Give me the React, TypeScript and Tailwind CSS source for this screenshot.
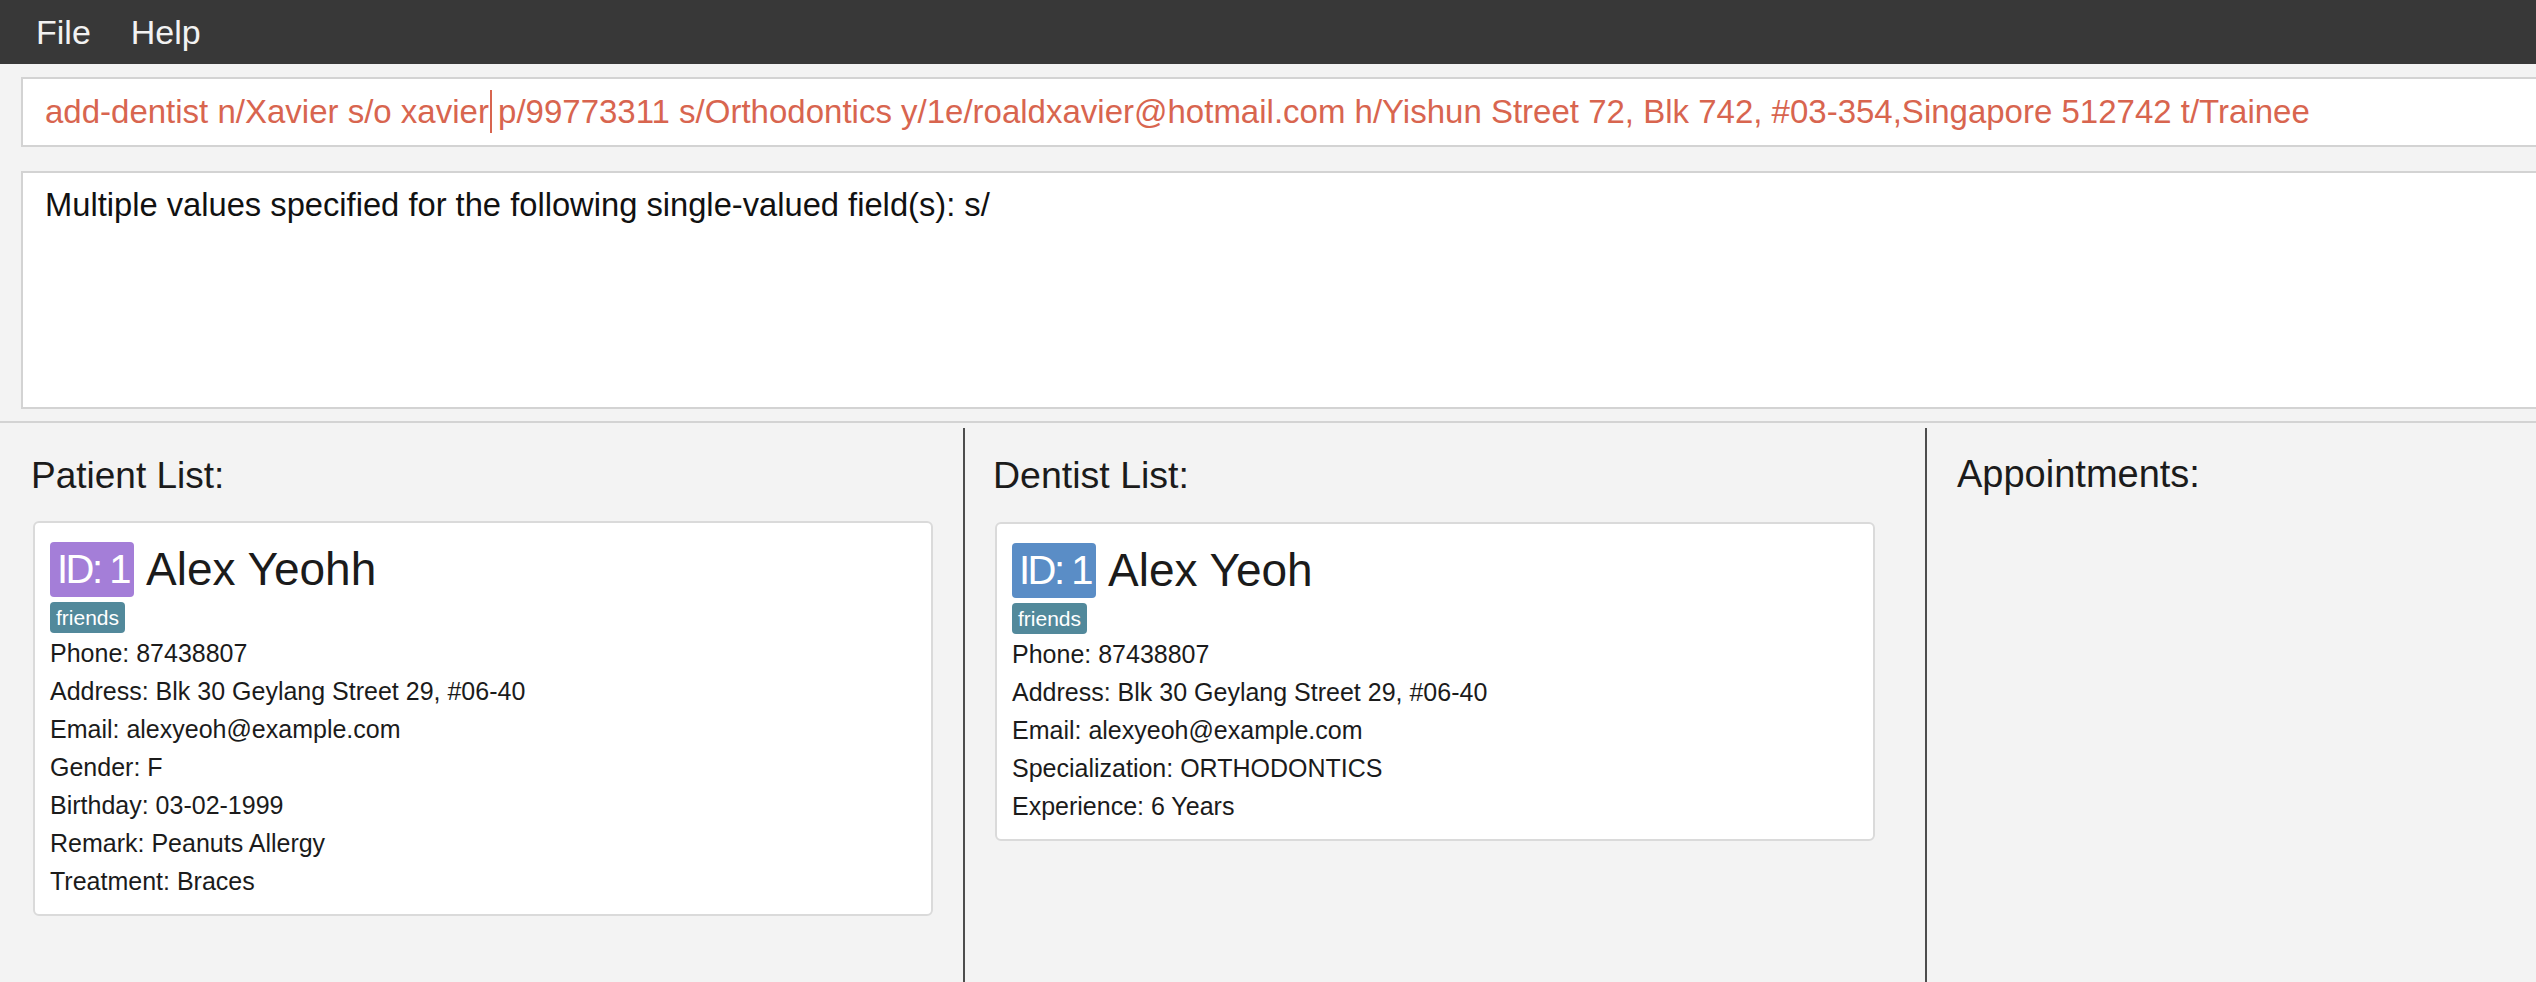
const font = { fontFamily: '"Liberation Sans", Arial, sans-serif' };

const command =
  "add-dentist n/Xavier s/o xavier";
const commandRest =
  " p/99773311 s/Orthodontics y/1e/roaldxavier@hotmail.com h/Yishun Street 72, Blk 742, #03-354,Singapore 512742 t/Trainee";

interface CardProps {
  name: string;
  badge: string;
  lines: string[];
  width: string;
}

function PersonCard({ name, badge, lines, width }: CardProps) {
  return (
    <div className={`${width} rounded-[6px] border-2 border-[#dadada] bg-white pt-[19px] pb-[14px] pl-[15px]`}>
      <div className="flex items-center">
        <span className={`${badge} h-[55px] rounded-[4px] pl-[7px] pr-[5px] text-[40px] leading-[55px] tracking-[-2.5px] text-white`}>
          ID: 1
        </span>
        <span className="ml-[12px] text-[46px] leading-[55px] text-[#1b1b1b]">{name}</span>
      </div>
      <div className="mt-[5px] flex">
        <span className="h-[31px] rounded-[4px] bg-[#52899b] px-[6px] text-[21px] leading-[31px] text-white">
          friends
        </span>
      </div>
      <div className="mt-px text-[25px] leading-[38px] text-[#1b1b1b]">
        {lines.map((l) => (
          <div key={l}>{l}</div>
        ))}
      </div>
    </div>
  );
}

export default function App() {
  return (
    <div className="flex h-screen w-full flex-col overflow-hidden bg-[#f3f3f3]" style={font}>
      {/* menu bar */}
      <div className="flex h-[64px] shrink-0 items-center bg-[#383838] pl-[36px] text-[34px] leading-[64px] text-[#f2f2f2]">
        <span>File</span>
        <span className="ml-[40px]">Help</span>
      </div>

      {/* command box */}
      <div className="mt-[13px] ml-[21px] h-[70px] shrink-0 border-y-2 border-l-2 border-[#d3d3d3] bg-white pl-[22px] text-[33px] leading-[66px] whitespace-nowrap text-[#d8654f]">
        {command}
        <span className="relative">
          <span className="absolute top-[-3px] left-[1px] h-[43px] w-[2px] bg-[#d8654f]" />
        </span>
        {commandRest}
      </div>

      {/* result box */}
      <div className="mt-[24px] ml-[21px] h-[238px] shrink-0 border-y-2 border-l-2 border-[#d3d3d3] bg-white pt-[16px] pl-[22px] text-[32.7px] leading-none text-[#111]">
        Multiple values specified for the following single-valued field(s): s/
      </div>

      <div className="mt-[12px] h-[2px] shrink-0 bg-[#d3d3d3]" />

      {/* lists */}
      <div className="mt-[5px] flex min-h-0 flex-1">
        <div className="w-[963px] shrink-0">
          <div className="pt-[29px] pl-[31px] text-[37px] leading-none text-[#1b1b1b]">Patient List:</div>
          <div className="mt-[27px] ml-[33px]">
            <PersonCard
              name="Alex Yeohh"
              badge="bg-[#a47ed8]"
              width="w-[900px]"
              lines={[
                "Phone: 87438807",
                "Address: Blk 30 Geylang Street 29, #06-40",
                "Email: alexyeoh@example.com",
                "Gender: F",
                "Birthday: 03-02-1999",
                "Remark: Peanuts Allergy",
                "Treatment: Braces",
              ]}
            />
          </div>
        </div>
        <div className="w-[962px] shrink-0 border-l-2 border-[#4d4d4d]">
          <div className="pt-[29px] pl-[28px] text-[37.5px] leading-none text-[#1b1b1b]">Dentist List:</div>
          <div className="mt-[27px] ml-[30px]">
            <PersonCard
              name="Alex Yeoh"
              badge="bg-[#5a8dc6]"
              width="w-[880px]"
              lines={[
                "Phone: 87438807",
                "Address: Blk 30 Geylang Street 29, #06-40",
                "Email: alexyeoh@example.com",
                "Specialization: ORTHODONTICS",
                "Experience: 6 Years",
              ]}
            />
          </div>
        </div>
        <div className="flex-1 border-l-2 border-[#4d4d4d]">
          <div className="pt-[27px] pl-[30px] text-[38px] leading-none text-[#1b1b1b]">Appointments:</div>
        </div>
      </div>
    </div>
  );
}
